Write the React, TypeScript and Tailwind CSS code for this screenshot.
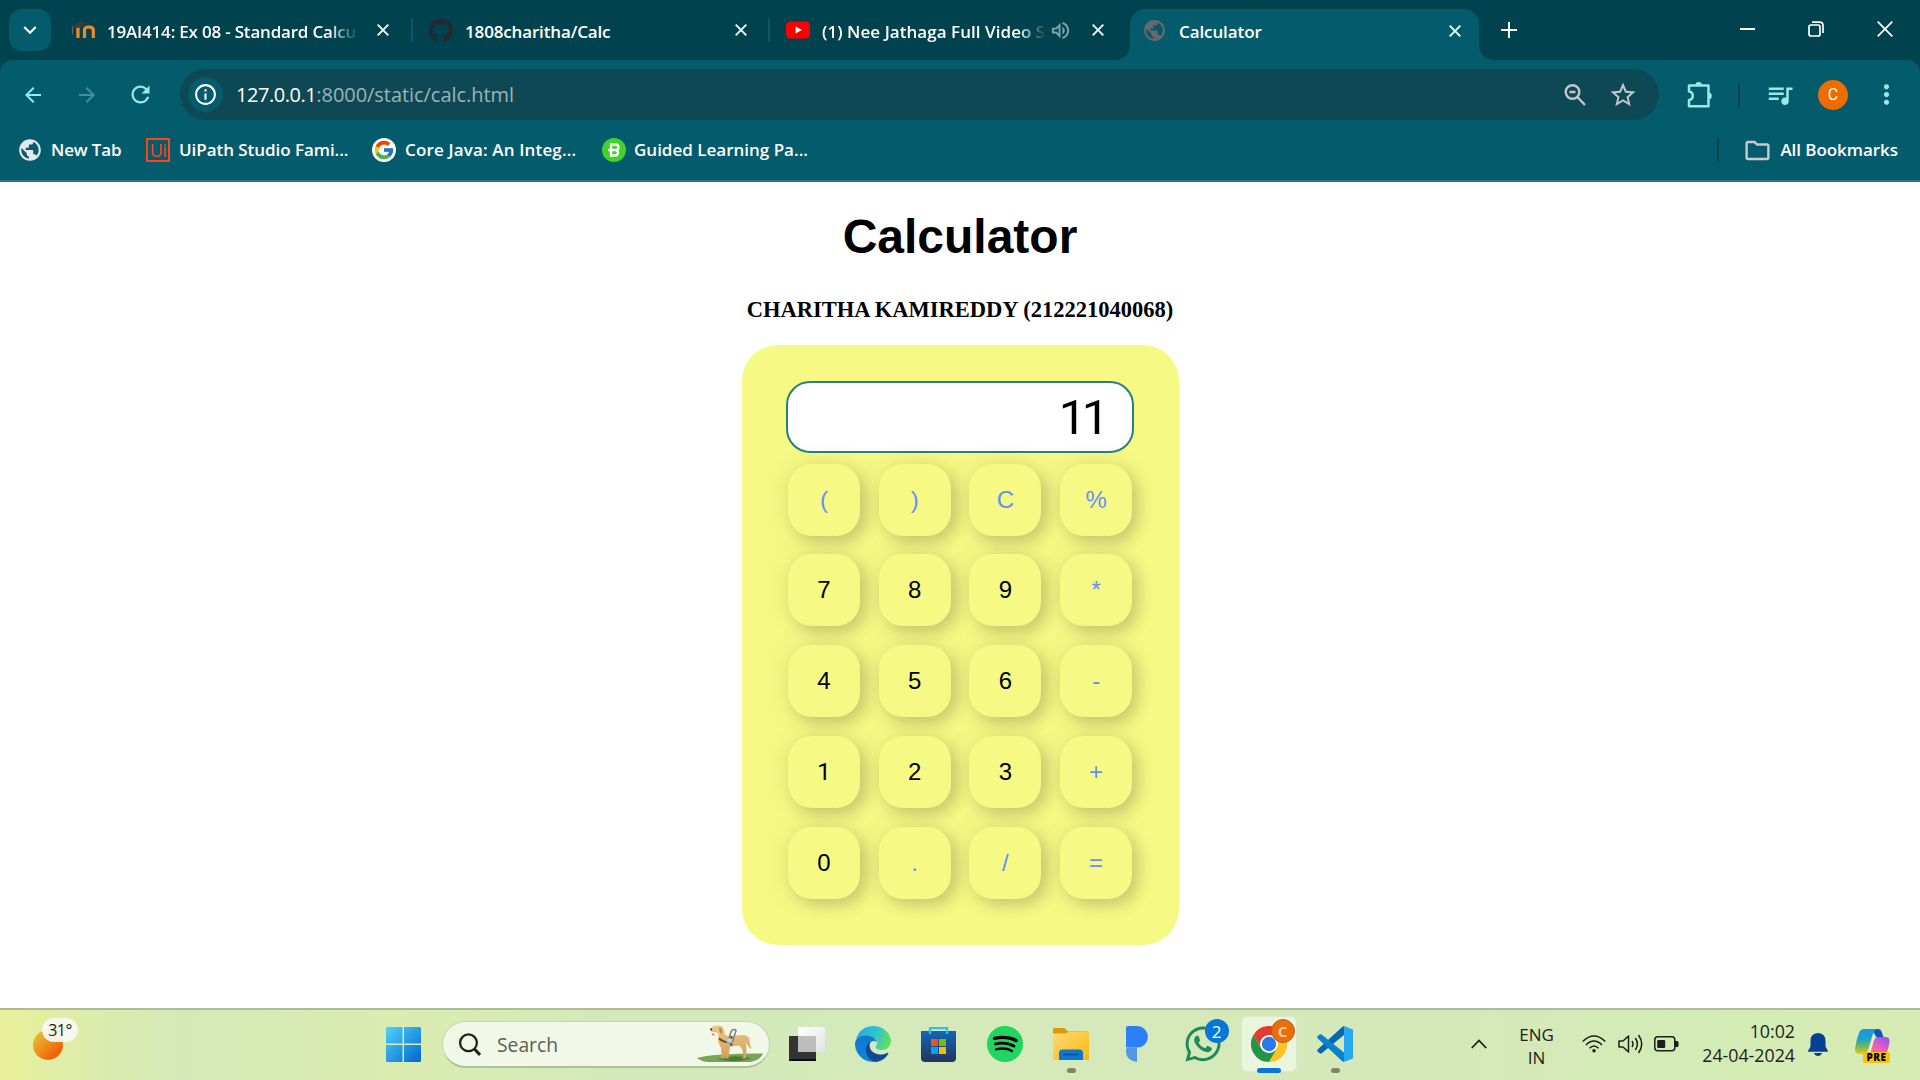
import React from "react";
import { FaGithub, FaSpotify, FaWhatsapp } from "react-icons/fa";
import { FcGoogle } from "react-icons/fc";
import {
  MdArrowBack,
  MdArrowForward,
  MdRefresh,
  MdInfoOutline,
  MdStarBorder,
  MdOutlineFolder,
  MdMoreVert,
  MdPublic,
  MdOutlineVolumeUp,
  MdOutlineQueueMusic,
  MdKeyboardArrowDown,
} from "react-icons/md";

const CloseX = ({ className = "" }: { className?: string }) => (
  <svg viewBox="0 0 12 12" className={`h-3 w-3 shrink-0 ${className}`} fill="none" stroke="#f2fbfb" strokeWidth="1.9">
    <path d="M.7.7 11.3 11.3M11.3.7.7 11.3" />
  </svg>
);

const MoodleIcon = () => (
  <svg viewBox="0 0 24 18" className="h-[18px] w-6 shrink-0" fill="none">
    <path d="M7 17V6" stroke="#f08a24" strokeWidth="3.2" />
    <path d="M13.500 17V9q0-3 4.300-3t4.500 3v8" stroke="#f08a24" strokeWidth="3.2" />
    <path d="M0 5 11 0l4 3-5 3.5-6 .5z" fill="#3b3b3b" />
    <path d="M1.500 5.500v8" stroke="#6b6258" strokeWidth="1.200" />
  </svg>
);

const YouTubeIcon = () => (
  <svg viewBox="0 0 24 18" className="h-[18px] w-6 shrink-0">
    <rect y=".5" width="24" height="17" rx="4.5" fill="#f00" />
    <path d="M9.6 5.4v7.2L15.8 9z" fill="#fff" />
  </svg>
);

function Tab({ icon, title, gap, audio }: { icon: React.ReactNode; title: React.ReactNode; gap: string; audio?: boolean }) {
  return (
    <div className="flex h-[43px] w-[357px] shrink-0 items-center pt-[2px]">
      <div className="flex h-full min-w-0 flex-1 items-center pl-[16px]">
        <div className="mb-[2px] flex w-6 shrink-0 justify-center">{icon}</div>
        <div className={`min-w-0 flex-1 pt-[2px] whitespace-nowrap ${gap}`}>{title}</div>
        {audio && <MdOutlineVolumeUp className="mr-[20px] mb-[2px] shrink-0 text-[23px] text-[#7fa3aa]" />}
      </div>
      <CloseX className="mb-[2px]" />
      <div className="w-[23px]" />
    </div>
  );
}

const Divider = () => <div className="h-6 w-[2px] shrink-0 rounded bg-[#055b6d]" />;

function TabStrip() {
  return (
    <div className="flex h-[60px] bg-[#00434f] pt-[9px] pl-[9px] text-[17px] font-semibold text-white">
      <div className="flex h-[42px] w-[42px] shrink-0 items-center justify-center rounded-[13px] bg-[#045b6c]">
        <MdKeyboardArrowDown className="text-[26px]" />
      </div>
      <div className="flex h-[42px] items-center pl-1">
        <Tab
          icon={<MoodleIcon />}
          gap="ml-3 mr-[19px] tracking-[-0.2px] [mask-image:linear-gradient(to_right,black_88%,transparent)]"
          title="19AI414: Ex 08 - Standard Calcu"
        />
        <div className="-ml-[1px]"><Divider /></div>
        <Tab icon={<FaGithub className="text-[25px] text-[#24292f]" />} gap="ml-3 -mr-1 tracking-[-0.15px]" title="1808charitha/Calc" />
        <div className="-ml-[2px]"><Divider /></div>
        <Tab
          icon={<YouTubeIcon />}
          gap="ml-3 mr-[3px] tracking-[0.050px] [mask-image:linear-gradient(to_right,black_87%,transparent)]"
          title="(1) Nee Jathaga Full Video S"
          audio
        />
      </div>
      <div className="relative ml-[3px] flex h-[51px] w-[349px] shrink-0 items-center rounded-t-[15px] bg-[#045b6c] pb-[8px]">
        <span className="absolute bottom-0 -left-[14px] h-[14px] w-[14px] bg-[radial-gradient(circle_at_0_0,#00434f_13.5px,#045b6c_14px)]" />
        <span className="absolute -right-[14px] bottom-0 h-[14px] w-[14px] bg-[radial-gradient(circle_at_100%_0,#00434f_13.5px,#045b6c_14px)]" />
        <MdPublic className="ml-3 h-[25px] w-[25px] text-[#67696d]" />
        <span className="ml-[12px] flex-1 pt-[2px] tracking-[-0.1px]">Calculator</span>
        <CloseX />
        <div className="w-[18px]" />
      </div>
      <svg viewBox="0 0 16 16" className="mt-[13px] ml-[22px] h-4 w-4" stroke="#fff" strokeWidth="2">
        <path d="M8 0v16M0 8h16" />
      </svg>
      <div className="mr-[27px] ml-auto flex h-10 items-center">
        <div className="h-[2px] w-[15px] bg-white" />
        <svg viewBox="0 0 16 16" className="ml-[53px] h-4 w-4" fill="none" stroke="#fff" strokeWidth="1.7">
          <rect x="1" y="4" width="11" height="11" rx="2" />
          <path d="M4 1.2h7.500q3.500 0 3.500 3.500V12" />
        </svg>
        <svg viewBox="0 0 16 16" className="ml-[53px] h-4 w-4" stroke="#fff" strokeWidth="1.7">
          <path d="m.7.7 14.600 14.600M15.300.7.7 15.300" />
        </svg>
      </div>
    </div>
  );
}

function Toolbar() {
  return (
    <div className="bg-[#00434f]">
      <div className="flex h-[69px] items-center rounded-t-[13px] bg-[#045b6c] pt-0 pl-[21px] text-[#9be9e6]">
        <MdArrowBack className="h-6 w-6" />
        <MdArrowForward className="ml-[30px] h-6 w-6 text-[#3f909b]" />
        <MdRefresh className="ml-[28px] h-[27px] w-[27px]" />
        <div className="ml-[26px] flex h-[51px] w-[1479px] items-center rounded-full bg-[#0e4855] pl-2">
          <div className="flex h-[35px] w-[35px] items-center justify-center rounded-full bg-[#045b6c] text-white">
            <MdInfoOutline className="h-[25px] w-[25px]" />
          </div>
          <div className="ml-[13px] text-[20px] leading-none whitespace-nowrap">
            <span className="tracking-[-0.45px] text-white">127.0.0.1</span>
            <span className="tracking-[-0.05px] text-[#9cb3b8]">:8000/static/calc.html</span>
          </div>
          <svg viewBox="0 0 24 24" className="mr-[21px] ml-auto h-6 w-6" fill="none" stroke="#c2c6c9" strokeWidth="2.400">
            <circle cx="9.500" cy="9" r="6.800" />
            <path d="m14.300 14 7.700 8M6.500 9h6" />
          </svg>
          <MdStarBorder className="mr-[21px] h-[30px] w-[30px] text-[#c2c6c9]" />
        </div>
        <svg viewBox="0 0 26 28" className="ml-[28px] h-7 w-[26px]" fill="none" stroke="#9be9e6" strokeWidth="2.500" strokeLinejoin="round">
          <path d="M2 4.500h19.500v20.800H2v-6.300c5-.6 5-8 0-8.600z" />
          <path d="M8.500 4a3.200 3 0 0 1 6.400 0zM22 11.700a2.700 3.200 0 0 1 0 6.400z" fill="#9be9e6" stroke="none" />
        </svg>
        <div className="ml-[25px] h-6 w-[2px] bg-[#00434f]" />
        <MdOutlineQueueMusic className="ml-[25px] h-[30px] w-[30px]" />
        <div className="ml-[23px] flex h-[30px] w-[30px] items-center justify-center rounded-full bg-[#ee6c00] font-['Roboto'] text-[16px] text-white">C</div>
        <MdMoreVert className="ml-[23px] h-[31px] w-[31px]" />
      </div>
    </div>
  );
}

function BookmarksBar() {
  return (
    <div className="flex h-[53px] items-center border-b-2 border-[#217b83] bg-[#045b6c] pb-[9px] pl-[17px] text-[17px] font-semibold whitespace-nowrap text-white">
      <MdPublic className="h-[26px] w-[26px] text-[#e4e8ec]" />
      <span className="-mt-[1px] ml-2 w-[95px] tracking-[-0.15px]">New Tab</span>
      <div className="flex h-6 w-6 items-center justify-center border-2 border-[#fa4616] text-[18px] leading-none font-medium tracking-[-0.500px] text-[#fa4616]">Ui</div>
      <span className="-mt-[1px] ml-[9px] w-[193px] tracking-[-0.05px]">UiPath Studio Fami...</span>
      <div className="flex h-6 w-6 items-center justify-center rounded-full bg-white">
        <FcGoogle className="h-[22px] w-[22px]" />
      </div>
      <span className="-mt-[1px] ml-[9px] w-[197px] tracking-[0.150px]">Core Java: An Integ...</span>
      <div className="flex h-6 w-6 items-center justify-center rounded-full bg-[#43d12c]">
        <svg viewBox="0 0 14 14" className="h-[14px] w-[14px]" fill="none" stroke="#fff" strokeWidth="2.300">
          <path d="M1 7h8.500M4 1.500h4.700a2.700 2.700 0 0 1 0 5.500 2.800 2.800 0 0 1 0 5.500H4zM4 7v6" />
        </svg>
      </div>
      <span className="-mt-[1px] ml-2">Guided Learning Pa...</span>
      <div className="ml-auto h-6 w-[2px] bg-[#00434f]" />
      <MdOutlineFolder className="ml-6 h-[29px] w-[29px] text-[#c6cbce]" />
      <span className="-mt-[1px] mr-[22px] ml-[8px] tracking-[-0.050px]">All Bookmarks</span>
    </div>
  );
}

const keys = ["(", ")", "C", "%", "7", "8", "9", "*", "4", "5", "6", "-", "1", "2", "3", "+", "0", ".", "/", "="];

function Calculator() {
  return (
    <main className="flex h-[826px] flex-col items-center bg-white font-['Liberation_Sans',sans-serif] text-black">
      <h1 className="mt-[31px] text-[48px] leading-[48px] font-bold">Calculator</h1>
      <h3 className="mt-[35px] font-['Liberation_Serif',serif] text-[22.5px] leading-[27px] font-bold">CHARITHA KAMIREDDY (212221040068)</h3>
      <div className="mt-[22px] flex h-[600px] w-[437px] flex-col items-center rounded-[36px] bg-[#f6f984] pt-[36px]">
        <div className="flex h-[72px] w-[348px] shrink-0 items-center justify-end rounded-[24px] border-2 border-[#267f80] bg-white pt-[2px] pr-[27px] font-['Roboto'] text-[49px] tracking-[-4.400px]">
          11
        </div>
        <div className="mt-[10.700px] grid grid-cols-4 gap-[18.750px]">
          {keys.map((k) => (
            <button
              key={k}
              className={`h-[72px] w-[72px] rounded-[24px] bg-[#f6f984] text-[24px] shadow-[6px_6px_14px_rgba(70,70,50,0.21),0_0_28px_rgba(70,70,50,0.11)] ${/\d/.test(k) ? "text-black" : "text-[#6590fb]"} ${k === "1" ? "font-['Roboto']" : ""}`}
            >
              {k}
            </button>
          ))}
        </div>
      </div>
    </main>
  );
}

const Slot = ({ children, dot }: { children: React.ReactNode; dot?: boolean }) => (
  <div className="relative flex h-full w-[66px] shrink-0 items-center justify-center pb-[2px]">
    {children}
    {dot && <span className="absolute bottom-[7px] left-[29px] h-[5px] w-[9px] rounded-full bg-[#7c8768]" />}
  </div>
);

const WindowsIcon = () => (
  <svg viewBox="0 0 35 35" className="h-[35px] w-[35px]">
    <defs>
      <linearGradient id="win" x1="0" y1="0" x2="35" y2="35" gradientUnits="userSpaceOnUse">
        <stop stopColor="#4fd3ff" />
        <stop offset="1" stopColor="#0067cc" />
      </linearGradient>
    </defs>
    <path fill="url(#win)" d="M1 0h15.500v16.500H0V1zM18 0h16l1 1v15.500H18zM0 18h16.500v17H1l-1-1zM18 18h17v16l-1 1H18z" />
  </svg>
);

const DogIcon = () => (
  <svg viewBox="0 0 70 40" className="h-10 w-[70px]">
    <defs>
      <linearGradient id="fur" x1="0" y1="0" x2="0" y2="1">
        <stop stopColor="#ecc888" />
        <stop offset="1" stopColor="#d3a05a" />
      </linearGradient>
    </defs>
    <path d="M0 33q14-4.500 66-4.500-2 6-12 8.500H12q-7 0-12-4z" fill="#76a655" />
    <path d="M20 34q14-5 34-1-10 4-22 3z" fill="#4c7c38" />
    <path
      d="M14 4q1-4 7-3.500 5 0 6 4l1 5q2 1.500 6 1.500l12-1q5 0 6.500 4 0 6 2 9l-1 .5q-3-2-4-6-.5 5 0 9l-.5 7h-4l1.500-3-1.500-7-3-3-9 1-1.500 12h-4l.5-4-1 4h-3.500l1-4-.5-7q-2.500-3-3-8l.5-6-3-1.500q-4 1-5-1z"
      fill="url(#fur)"
    />
    <path d="M22 2q4 1 3 7-3 0-3-7z" fill="#c08b48" />
    <circle cx="14.200" cy="4.300" r="1.100" fill="#3a2b22" />
    <path d="m14.500 9 2.500-.4.500 1.800q-2 .8-3-1.400z" fill="#e0625c" />
    <path d="M22 13.500q6 5 13 3.500M34.500 11q-1 6 0 10" fill="none" stroke="#6f4a1e" strokeWidth="2" />
    <path d="m31 16 3.500-10.500q3-2 4.500 0L35.500 17" fill="none" stroke="#76808f" strokeWidth="1.500" />
    <path d="m31 13 4.500 1-1 4-5-.5z" fill="#a5d8f4" />
  </svg>
);

const EdgeIcon = () => (
  <svg viewBox="0 0 36 36" className="h-9 w-9">
    <defs>
      <linearGradient id="e1" x1="2" y1="6" x2="36" y2="18" gradientUnits="userSpaceOnUse">
        <stop stopColor="#29a9ea" />
        <stop offset=".5" stopColor="#2fc4cf" />
        <stop offset="1" stopColor="#69e352" />
      </linearGradient>
      <linearGradient id="e2" x1="6" y1="8" x2="14" y2="36" gradientUnits="userSpaceOnUse">
        <stop stopColor="#1376c9" />
        <stop offset="1" stopColor="#0a86e0" />
      </linearGradient>
    </defs>
    <path d="M1 14C3 5 10 0 18 0c11 0 18 8 18 15 0 6-5 9-9 9-5 0-7-2-6-4 2-2 2-6-2-8-6-4-15-2-18 2z" fill="url(#e1)" />
    <path d="M0 18c0-6 6-9 12-8.500 5 .3 9 3 10 7-3-3-8-1-8 5 0 9 7 13 12 12.500A18 18 0 0 1 0 18z" fill="url(#e2)" />
    <path d="M14.500 16c-6 4-5 16 5 19.800 6 .6 12-4 13.800-8.300.2-1-.5-1-1.300-.6-8 3.600-17 .6-17.500-7.400z" fill="#114a94" />
  </svg>
);

const StoreIcon = () => (
  <svg viewBox="0 0 35 35" className="h-[35px] w-[35px]">
    <defs>
      <linearGradient id="store" x1="0" y1="0" x2="0" y2="1">
        <stop stopColor="#0f67b7" />
        <stop offset="1" stopColor="#23345e" />
      </linearGradient>
    </defs>
    <path d="M0 4h35v27q0 4-4 4H4q-4 0-4-4z" fill="url(#store)" />
    <path d="M9 7V1.200h17V7" fill="none" stroke="#2cc0f2" strokeWidth="2.200" />
    <path fill="#f25022" d="M10 12h7v7h-7z" />
    <path fill="#7fba00" d="M18 12h7v7h-7z" />
    <path fill="#00a4ef" d="M10 20h7v7h-7z" />
    <path fill="#ffb900" d="M18 20h7v7h-7z" />
  </svg>
);

const FolderIcon = () => (
  <svg viewBox="0 0 36 33" className="h-[33px] w-9">
    <defs>
      <linearGradient id="fold" x1="0" y1="0" x2="1" y2="1">
        <stop stopColor="#ffdb73" />
        <stop offset="1" stopColor="#fbb614" />
      </linearGradient>
    </defs>
    <path d="M0 1.500Q0 0 1.500 0h9q1 0 2 1l2.500 2.500H34q2 0 2 2H0z" fill="#dc9a08" />
    <path d="M0 6h12l3.500-2H36v28H0z" fill="url(#fold)" />
    <path d="M6 32v-7q0-3.500 3.500-3.500h17q3.500 0 3.500 3.500v7z" fill="#0c78d0" />
    <path d="M10.500 26.500h15" stroke="#0a4d92" strokeWidth="1.600" />
  </svg>
);

const ChromeIcon = () => (
  <svg viewBox="-18 -18 36 36" className="h-9 w-9">
    <path d="M-15.600-9A18 18 0 0 1 15.600-9L0-9-7.800 4.500z" fill="#e33b2e" />
    <path d="M15.600-9A18 18 0 0 1 0 18L7.800 4.500 0-9z" fill="#fcc31e" />
    <path d="M0 18A18 18 0 0 1-15.600-9L-7.800 4.500H7.800z" fill="#249545" />
    <circle r="9" fill="#fff" />
    <circle r="7.200" fill="#2a78ee" />
  </svg>
);

const VSCodeIcon = () => (
  <svg viewBox="0 0 36 36" className="h-9 w-9">
    <path d="M27 0v9L4.700 27.300q-1 .8-2 0L.8 25.700q-1.200-1.200 0-2.400L25.500.8z" fill="#0868ae" />
    <path d="M.8 12.500q-1.300-1.500 0-2.500l1.800-1.500q1-.7 2 0L27 26.500v9.500l-2-1z" fill="#0a81cd" />
    <path d="m27 0 9 3.500v29L27 36z" fill="#28a8ef" />
  </svg>
);

const CopilotIcon = () => (
  <svg viewBox="0 0 36 35" className="h-[35px] w-9">
    <defs>
      <linearGradient id="c1" x1="0" y1="0" x2="0" y2="1">
        <stop stopColor="#1797e8" />
        <stop offset=".4" stopColor="#1fa0c8" />
        <stop offset=".75" stopColor="#7cbf48" />
        <stop offset="1" stopColor="#f5c518" />
      </linearGradient>
      <linearGradient id="c2" x1="1" y1="0" x2="0" y2="1">
        <stop stopColor="#8a55f0" />
        <stop offset=".5" stopColor="#e85bc0" />
        <stop offset="1" stopColor="#ff8a55" />
      </linearGradient>
    </defs>
    <path d="M16 1h7q3 0 4 4l1.500 4h-7z" fill="#1450c4" />
    <path d="M9 1h13q-3 1-4.500 6L13 22q-1.500 4-5 4H4q-4 0-4-5 1-8 4-16 1.500-4 5-4z" fill="url(#c1)" />
    <path d="M22 9h8q5 0 4.500 5-1 7-3 11H9q4 0 5-3l3.500-9q1.500-4 4.500-4z" fill="url(#c2)" />
    <path d="M17.500 10.500q1.500-1.500 4-1.500-2 1-3 5l-3 10.500h-3.500q1-1 2-3.500z" fill="#e6efc9" />
  </svg>
);

function Taskbar() {
  return (
    <footer className="flex h-[72px] items-center border-t-2 border-[#aebb98] bg-[linear-gradient(to_right,#e8f198_0,#e0eda6_60px,#d5e9b8_180px,#daecae_390px,#d3e9bb_620px,#d5e9ba_900px,#d6e8b9_1460px,#d3ebb6_1650px,#d6ecb2_1920px)] text-[#1c1f1a]">
      <div className="relative ml-[33px] h-[52px] w-[337px]">
        <div className="mt-[11px] h-[30px] w-[30px] rounded-full bg-linear-to-br from-[#eab62c] from-15% to-[#f0650c] to-75%" />
        <div className="absolute -top-[1px] left-[9px] flex h-6 w-9 items-center justify-center rounded-full bg-[#f9f8f0]/95 text-[16px] tracking-[-0.500px]">31°</div>
      </div>
      <Slot><WindowsIcon /></Slot>
      <div className="-mt-[1px] ml-[6px] flex h-[47px] w-[328px] shrink-0 items-center rounded-full border-[1.500px] border-b-2 border-[#c5d6a8] border-b-[#afc09a] bg-[#f2f8e8] pl-[16px]">
        <svg viewBox="0 0 22 23" className="h-[23px] w-[22px]" fill="none" stroke="#222" strokeWidth="2.300">
          <circle cx="9.500" cy="9.800" r="8.400" />
          <path d="m15.500 16 5.500 6" strokeWidth="3" />
        </svg>
        <span className="mt-[2px] ml-4 text-[19.300px] text-[#5b5f56]">Search</span>
        <div className="mt-[2px] mr-[2px] ml-auto"><DogIcon /></div>
      </div>
      <div className="w-[3.500px] shrink-0" />
      <Slot>
        <svg viewBox="0 0 36 34" className="h-[34px] w-9">
          <defs>
            <linearGradient id="tv" x1="0" y1="0" x2="1" y2="1"><stop stopColor="#fff" /><stop offset="1" stopColor="#e2e2e4" /></linearGradient>
          </defs>
          <rect y="9" width="27" height="25" rx="1" fill="#333" />
          <rect x="9" width="27" height="25" rx="1" fill="url(#tv)" />
          <path d="M9 9h18v16H9z" fill="#bdbdbd" />
          <path d="M0 32h27v1q0 1-1 1H1q-1 0-1-1z" fill="#0c0c0c" />
        </svg>
      </Slot>
      <Slot><EdgeIcon /></Slot>
      <Slot><StoreIcon /></Slot>
      <Slot>
        <div className="flex h-9 w-9 items-center justify-center rounded-full bg-[radial-gradient(circle,black_15px,#1fd662_16px)]">
          <FaSpotify className="h-[36px] w-[36px] shrink-0 text-[#1fd662]" />
        </div>
      </Slot>
      <Slot dot><FolderIcon /></Slot>
      <Slot>
        <svg viewBox="0 0 22 36" className="h-9 w-[22px]">
          <path d="M2 0h9a10.800 10.800 0 0 1 0 21.600H0V2q0-2 2-2z" fill="#2d7ff5" />
          <path d="M0 24q0-2.400 2.500-2.400H11V36Q0 34 0 26z" fill="#5696ea" />
        </svg>
      </Slot>
      <Slot>
        <FaWhatsapp className="h-10 w-10 text-[#1d8b57]" />
        <span className="absolute top-[9px] left-[35px] flex h-6 w-6 items-center justify-center rounded-full bg-[#0478d6] text-[17px] leading-none text-white">2</span>
      </Slot>
      <Slot>
        <div className="flex h-14 w-14 items-center justify-center rounded-[6px] border border-[#dde8c8] bg-[#ebf4dd]"><ChromeIcon /></div>
        <span className="absolute top-[9px] left-[35px] flex h-6 w-6 items-center justify-center rounded-full border border-[#9a6a3a] bg-[#ee6c00] text-[15px] leading-none font-bold text-[#f8cfa8]">C</span>
        <span className="absolute bottom-[7px] left-[21px] h-[5px] w-6 rounded-full bg-[#0478d6]" />
      </Slot>
      <Slot dot><VSCodeIcon /></Slot>
      <svg viewBox="0 0 16 10" className="-mt-[2px] ml-[103px] h-[10px] w-4 shrink-0" fill="none" stroke="#1c1f1a" strokeWidth="1.800">
        <path d="m.8 9 7.200-7.500L15.200 9" />
      </svg>
      <div className="mt-[1px] ml-[30px] w-10 text-center text-[17px] leading-[23px]">ENG<br />IN</div>
      <svg viewBox="0 0 24 18" className="-mt-[3px] ml-[25px] h-[18px] w-6 shrink-0" fill="none" stroke="#1c1f1a" strokeWidth="1.500">
        <path d="M.7 6.500Q12-4.500 23.300 6.500M4 10Q12 2 20 10M7.500 13.300q4.500-4.500 9 0" />
        <circle cx="12" cy="15.800" r="1.700" fill="#1c1f1a" stroke="none" />
      </svg>
      <svg viewBox="0 0 25 20" className="-mt-[2px] ml-3 h-5 w-[25px] shrink-0" fill="none" stroke="#1c1f1a" strokeWidth="1.500">
        <path d="M1 7h4l5.500-5v16L5 13H1zM14 7q2 3 0 6M17.300 4q4.200 6 0 12M20.500 1q6.500 9 0 18" strokeLinejoin="round" />
      </svg>
      <svg viewBox="0 0 25 16" className="-mt-[2px] ml-[11px] h-4 w-[25px] shrink-0">
        <rect x=".8" y=".8" width="20" height="14" rx="3" fill="none" stroke="#1c1f1a" strokeWidth="1.500" />
        <rect x="3.200" y="4" width="8" height="8" rx="1" fill="#1c1f1a" />
        <path d="M21 5h2q1.500 0 1.500 1.500v3q0 1.500-1.500 1.500h-2z" fill="#1c1f1a" />
      </svg>
      <div className="-mt-[4px] ml-auto text-right text-[17.800px] leading-6 text-[#1c1f1a]">10:02<br />24-04-2024</div>
      <svg viewBox="0 0 20 23" className="-mt-[1px] ml-[13px] h-[23px] w-5 shrink-0" fill="#063f93">
        <path d="M10 0q7.500.5 7.500 8v5.500l2.500 4.500v.8H0V18l2.500-4.500V8Q2.500.5 10 0zM6 20h8q-1 3-4 3t-4-3z" />
      </svg>
      <div className="relative mr-[29px] ml-[27px]">
        <CopilotIcon />
        <span className="absolute top-[24px] left-2 flex h-[11px] w-[27px] items-center justify-center rounded-[2px] bg-[#fdc10a] text-[10px] leading-none font-extrabold tracking-[0.500px] text-black">PRE</span>
      </div>
    </footer>
  );
}

export default function App() {
  return (
    <div className="h-[1080px] w-[1920px] overflow-hidden bg-white font-['Open_Sans','Noto_Sans',sans-serif]">
      <TabStrip />
      <Toolbar />
      <BookmarksBar />
      <Calculator />
      <Taskbar />
    </div>
  );
}
